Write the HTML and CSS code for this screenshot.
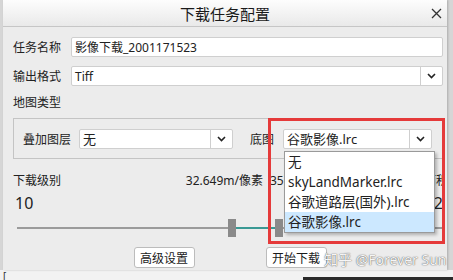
FILE: index.html
```html
<!DOCTYPE html>
<html lang="zh-CN">
<head>
    <meta charset="UTF-8">
    <meta name="viewport" content="width=device-width, initial-scale=1.0">
    <title>下载任务配置</title>
    <link rel="stylesheet" href="styles.css">
</head>
<body>

<div class="dialog">
    <div class="titlebar">
        <span class="title">下载任务配置</span>
        <span class="close">
            <svg width="11" height="11" viewBox="0 0 11 11"><path d="M1 1 L10 10 M10 1 L1 10" stroke="#333" stroke-width="1.3" fill="none"/></svg>
        </span>
    </div>

    <div class="content">
        <div class="row">
            <label class="label">任务名称</label>
            <div class="input">影像下载_2001171523</div>
        </div>

        <div class="row">
            <label class="label">输出格式</label>
            <div class="select wide">
                <span class="value">Tiff</span>
                <span class="arrow"><svg width="9" height="6" viewBox="0 0 9 6"><path d="M1 1 L4.5 4.5 L8 1" stroke="#222" stroke-width="1.6" fill="none"/></svg></span>
            </div>
        </div>

        <div class="section">地图类型</div>

        <!-- 图层选择 -->
        <div class="groupbox">
            <label class="group-label">叠加图层</label>
            <div class="select layer">
                <span class="value">无</span>
                <span class="arrow"><svg width="9" height="6" viewBox="0 0 9 6"><path d="M1 1 L4.5 4.5 L8 1" stroke="#222" stroke-width="1.6" fill="none"/></svg></span>
            </div>
            <label class="group-label base-label">底图</label>
            <div class="select base">
                <span class="value">谷歌影像.lrc</span>
                <span class="arrow"><svg width="9" height="6" viewBox="0 0 9 6"><path d="M1 1 L4.5 4.5 L8 1" stroke="#222" stroke-width="1.6" fill="none"/></svg></span>
            </div>
        </div>

        <div class="level-row">
            <span class="level-label">下载级别</span>
            <span class="resolution">32.649m/像素</span>
            <span class="area">
                <span>35万像素</span>
                <span class="area-end">面积</span>
            </span>
        </div>

        <div class="level-values">
            <span>10</span>
            <span>12</span>
        </div>

        <div class="slider">
            <div class="track"></div>
            <div class="range"></div>
            <div class="thumb thumb-low"></div>
            <div class="thumb thumb-high"></div>
        </div>

        <div class="button-container">
            <button type="button">高级设置</button>
            <button type="button">开始下载</button>
        </div>
    </div>

    <!-- 展开的底图下拉列表 -->
    <ul class="dropdown">
        <li>无</li>
        <li>skyLandMarker.lrc</li>
        <li>谷歌道路层(国外).lrc</li>
        <li class="selected">谷歌影像.lrc</li>
    </ul>

    <div class="highlight-box"></div>
    <div class="watermark">知乎 @Forever Sun</div>
</div>

<div class="below">
    <span class="below-mark">[</span>
    <span class="below-dark"></span>
</div>

</body>
</html>
```

FILE: styles.css
```css
html, body {
    margin: 0;
    padding: 0;
}

body {
    width: 453px;
    height: 280px;
    overflow: hidden;
    background-color: #d6d6d6;
    font-family: "Noto Sans", "Noto Sans CJK SC", sans-serif;
    font-size: 12px;
    color: #222;
}

.dialog {
    position: relative;
    margin-left: 3px;
    width: 444px;
    height: 270px;
    background-color: #ececec;
    box-shadow: 1px 0 2px rgba(0, 0, 0, 0.2);
}

.titlebar {
    height: 27px;
    box-sizing: border-box;
    border-bottom: 1px solid #c6c6c6;
    background: linear-gradient(#fdfdfd, #e9e9e9);
    display: flex;
    align-items: center;
    justify-content: center;
    position: relative;
}

.title {
    font-size: 15px;
    color: #1a1a1a;
}

.close {
    position: absolute;
    right: 5px;
    top: 8px;
    display: flex;
}

.content {
    padding: 10px 4px 0 10px;
    display: flex;
    flex-direction: column;
}

.row {
    display: flex;
    align-items: center;
    height: 20px;
    margin-bottom: 9px;
}

.label {
    width: 58px;
    flex-shrink: 0;
}

.input, .select {
    height: 20px;
    box-sizing: border-box;
    background-color: #fff;
    border: 1px solid #cfcfcf;
    border-radius: 2px;
    display: flex;
    align-items: center;
}

.input {
    flex: 1;
    padding-left: 3px;
}

.select .value {
    flex: 1;
    padding-left: 3px;
    overflow: hidden;
    white-space: nowrap;
}

.select .arrow {
    width: 21px;
    height: 100%;
    border-left: 1px solid #cfcfcf;
    display: flex;
    align-items: center;
    justify-content: center;
}

.wide {
    flex: 1;
}

.section {
    height: 14px;
    line-height: 14px;
    margin-top: 1px;
}

.groupbox {
    margin-top: 8px;
    height: 41px;
    box-sizing: border-box;
    border: 1px solid #c4c4c4;
    display: flex;
    align-items: center;
    padding-left: 9px;
}

.group-label {
    width: 56px;
}

.layer {
    width: 154px;
    font-size: 13px;
}

.base-label {
    width: 33px;
    margin-left: 17px;
}

.base {
    width: 149px;
    font-size: 13px;
}

.level-row {
    display: flex;
    align-items: center;
    height: 16px;
    margin-top: 13px;
}

.level-label {
    width: 172px;
}

.resolution {
    width: 78px;
    text-align: right;
}

.area {
    flex: 1;
    margin-left: 7px;
    display: flex;
    justify-content: space-between;
    overflow: hidden;
    white-space: nowrap;
}

.area-end {
    margin-right: -5px;
}

.level-values {
    display: flex;
    justify-content: space-between;
    font-size: 16px;
    height: 22px;
    line-height: 22px;
    margin-top: 4px;
    padding-left: 2px;
}

.slider {
    position: relative;
    height: 18px;
    margin-top: 5px;
    margin-left: 4px;
}

.track {
    position: absolute;
    left: 0;
    right: 0;
    top: 8px;
    height: 2px;
    background-color: #9b9b9b;
}

.range {
    position: absolute;
    left: 219px;
    width: 40px;
    top: 8px;
    height: 2px;
    background-color: #3a9994;
}

.thumb {
    position: absolute;
    top: 0;
    width: 8px;
    height: 18px;
    background-color: #8a8a8a;
}

.thumb-low {
    left: 211px;
}

.thumb-high {
    left: 258px;
}

.button-container {
    display: flex;
    justify-content: center;
    gap: 71px;
    margin-top: 10px;
    padding-left: 4px;
}

button {
    width: 61px;
    height: 21px;
    padding: 0;
    background-color: #fff;
    border: 1px solid #bcbcbc;
    border-radius: 3px;
    font-family: "Noto Sans CJK SC", sans-serif;
    font-size: 12px;
    color: #1a1a1a;
}

.dropdown {
    position: absolute;
    left: 281px;
    top: 151px;
    width: 149px;
    margin: 0;
    padding: 0;
    list-style: none;
    background-color: #fff;
    border: 1px solid #9a9a9a;
    box-shadow: 2px 2px 3px rgba(0, 0, 0, 0.25);
    font-size: 13.5px;
}

.dropdown li {
    height: 20px;
    line-height: 20px;
    padding-left: 3px;
    white-space: nowrap;
}

.dropdown .selected {
    background-color: #cce8ff;
}

.highlight-box {
    position: absolute;
    left: 265px;
    top: 118px;
    width: 177px;
    height: 126px;
    box-sizing: border-box;
    border: 3px solid #e53a3a;
}

.watermark {
    position: absolute;
    left: 321px;
    top: 249px;
    font-size: 14px;
    color: #f6f6f6;
    text-shadow: 0 0 1px rgba(0, 0, 0, 0.7), 0 0 2px rgba(0, 0, 0, 0.25);
    white-space: nowrap;
}

.below {
    height: 10px;
    background-color: #f2f2f2;
    display: flex;
    align-items: flex-end;
}

.below-mark {
    margin-left: 3px;
    font-size: 10px;
    line-height: 8px;
    color: #333;
}

.below-dark {
    margin-left: auto;
    width: 150px;
    height: 3px;
    background-color: #2a2a2a;
}
```
